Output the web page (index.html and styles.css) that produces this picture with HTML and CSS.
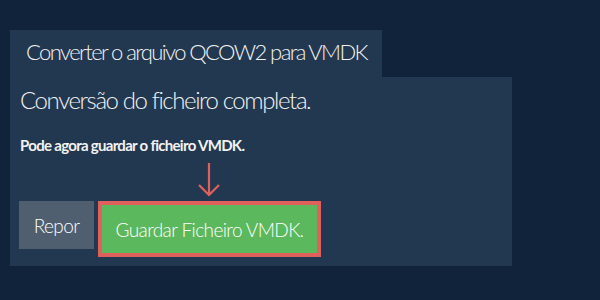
FILE: index.html
```html
<!DOCTYPE html>
<html lang="pt">
<head>
  <meta charset="UTF-8">
  <title>QCOW2 para VMDK</title>
  <link rel="stylesheet" href="styles.css">
</head>
<body>
  <div class="wrap">
    <div class="tab">Converter o arquivo QCOW2 para VMDK</div>
    <div class="panel">
      <h2>Conversão do ficheiro completa.</h2>
      <p class="note">Pode agora guardar o ficheiro VMDK.</p>
      <div class="actions">
        <button class="btn reset">Repor</button>
        <div class="save-wrap">
          <svg class="arrow" width="26" height="36" viewBox="0 0 26 36">
            <path d="M13 1 V33 M3 23 L13 33 L23 23" fill="none" stroke="#e0605c" stroke-width="2.2"/>
          </svg>
          <button class="btn save">Guardar Ficheiro VMDK.</button>
        </div>
      </div>
    </div>
  </div>
</body>
</html>
```

FILE: styles.css
```css
body {
  margin: 0;
  background: #10233a;
  font-family: Lato, "Open Sans", sans-serif;
  color: #f2f2f2;
}

.wrap {
  padding: 30px 0 0 10px;
  width: 502px;
}

.tab {
  display: inline-block;
  background: #223850;
  height: 47px;
  line-height: 44px;
  padding: 0 0 0 16px;
  font-family: "Lato Light", Lato, sans-serif;
  font-size: 22px;
  font-weight: 300;
  letter-spacing: -1.6px;
  white-space: nowrap;
  box-sizing: border-box;
  width: 372px;
}

.panel {
  background: #223850;
  padding: 8px 9px 0 10px;
  height: 189px;
  box-sizing: border-box;
}

h2 {
  margin: 0;
  font-family: "Lato Light", Lato, sans-serif;
  font-size: 24px;
  font-weight: 300;
  letter-spacing: -1.4px;
  line-height: 30px;
}

.note {
  margin: 20px 0 0 0;
  font-size: 15px;
  font-weight: bold;
  letter-spacing: -0.7px;
  line-height: 20px;
}

.actions {
  display: flex;
  align-items: flex-start;
  gap: 4px;
  margin: 46px 0 0 -1px;
}

.btn {
  border: none;
  color: #fff;
  font-family: "Lato Light", Lato, sans-serif;
  font-size: 19px;
  font-weight: 300;
  letter-spacing: -0.6px;
  cursor: pointer;
}

.reset {
  background: #4f5f70;
  width: 75px;
  height: 48px;
}

.save-wrap {
  position: relative;
}

.save {
  background: #5cb85c;
  border: 4px solid #e0605c;
  width: 223px;
  height: 56px;
}

.arrow {
  position: absolute;
  left: 98px;
  top: -39px;
}
```
